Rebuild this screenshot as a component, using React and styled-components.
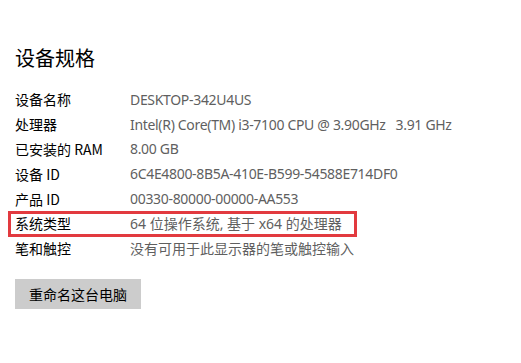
import React from "react";
import styled, { createGlobalStyle } from "styled-components";

const Global = createGlobalStyle`
  html, body { margin: 0; padding: 0; background: #ffffff; }
  body { font-family: "Segoe UI", "Noto Sans", "Noto Sans CJK SC", sans-serif; }
`;

const Page = styled.div`
  padding: 44px 0 0 15px;
  width: 521px;
  height: 363px;
  box-sizing: border-box;
  background: #fff;
`;

const Title = styled.h1`
  margin: 0 0 15px 0;
  font-size: 20px;
  line-height: 28px;
  font-weight: 400;
  color: #000;
  font-family: "Noto Sans CJK SC", sans-serif;
`;

const Specs = styled.div`
  display: flex;
  flex-direction: column;
`;

const Row = styled.div`
  position: relative;
  display: grid;
  grid-template-columns: 115px auto;
  height: 24.8px;
  align-items: center;
  font-size: 14px;

  ${(p) =>
    p.$highlight &&
    `
    &::after {
      content: "";
      position: absolute;
      left: -7px;
      top: 0;
      width: 349px;
      height: 26px;
      border: 3px solid #e23a3f;
      box-sizing: border-box;
      pointer-events: none;
    }
  `}
`;

const Label = styled.span`
  color: #000;
  font-family: "Noto Sans CJK SC", sans-serif;
  white-space: nowrap;
`;

const Value = styled.span`
  color: #5f5f5f;
  font-family: "Noto Sans", "Noto Sans CJK SC", sans-serif;
  letter-spacing: ${(p) => (p.$cjk ? "0" : "-0.32px")};
  white-space: pre;
`;

const Button = styled.button`
  margin-top: 18px;
  height: 30px;
  padding: 0 14px;
  border: none;
  background: #cccccc;
  color: #000;
  font-size: 14px;
  font-family: "Noto Sans CJK SC", sans-serif;
  align-self: flex-start;
`;

const rows = [
  ["设备名称", "DESKTOP-342U4US"],
  ["处理器", "Intel(R) Core(TM) i3-7100 CPU @ 3.90GHz   3.91 GHz"],
  ["已安装的 RAM", "8.00 GB"],
  ["设备 ID", "6C4E4800-8B5A-410E-B599-54588E714DF0"],
  ["产品 ID", "00330-80000-00000-AA553"],
  ["系统类型", "64 位操作系统, 基于 x64 的处理器", true, true],
  ["笔和触控", "没有可用于此显示器的笔或触控输入", false, true],
];

export default function App() {
  return (
    <Page>
      <Global />
      <Title>设备规格</Title>
      <Specs>
        {rows.map(([k, v, h, c]) => (
          <Row key={k} $highlight={h}>
            <Label>{k}</Label>
            <Value $cjk={c}>{v}</Value>
          </Row>
        ))}
        <Button>重命名这台电脑</Button>
      </Specs>
    </Page>
  );
}
